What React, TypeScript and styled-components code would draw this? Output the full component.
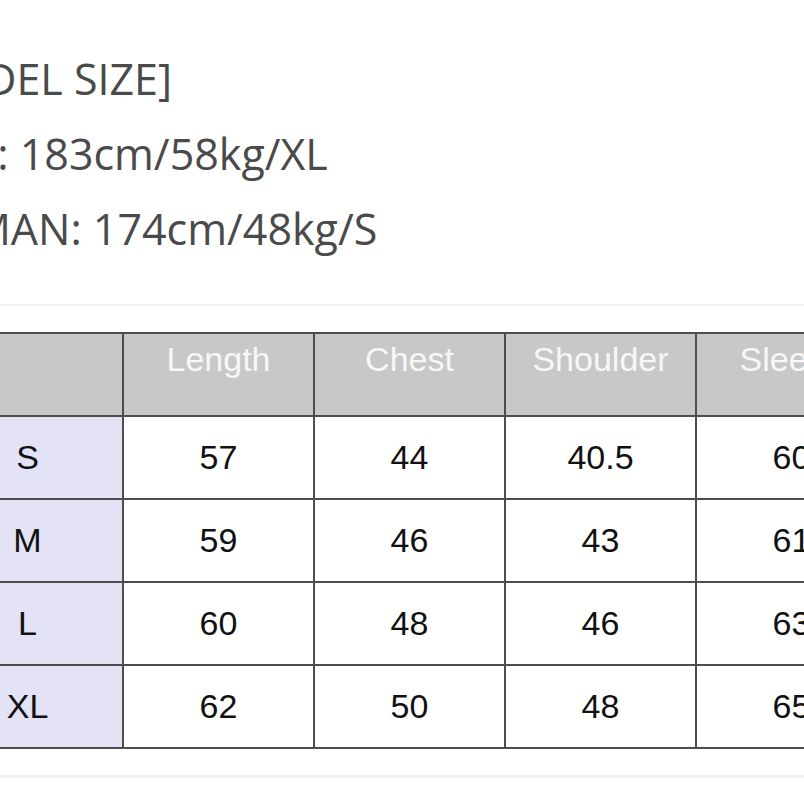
import styled, { createGlobalStyle } from 'styled-components';

const GlobalStyle = createGlobalStyle`
  html, body {
    margin: 0;
    padding: 0;
    background: #ffffff;
  }
  body {
    overflow: hidden;
  }
`;

const Page = styled.div`
  width: 804px;
  height: 804px;
  overflow: hidden;
  background: #ffffff;
`;

const ModelInfo = styled.div`
  margin-left: -101px;
  padding-top: 41px;
  font-family: "Open Sans", "Noto Sans", sans-serif;
  font-size: 43px;
  line-height: 75px;
  color: #4a4a4a;
  white-space: nowrap;
`;

const InfoLine = styled.div``;

const Divider = styled.div<{ $top: number; $bottom: number; $thick: number }>`
  height: ${p => p.$thick}px;
  background: #f1f1f1;
  margin-top: ${p => p.$top}px;
  margin-bottom: ${p => p.$bottom}px;
`;

const SizeTable = styled.table`
  margin-left: -69px;
  border-collapse: collapse;
  table-layout: fixed;
  width: ${191 * 5}px;
  font-family: "Liberation Sans", Arial, sans-serif;
  font-size: 34px;
`;

const HeadCell = styled.th`
  width: 191px;
  height: 83px;
  box-sizing: border-box;
  padding: 6px 0 0;
  vertical-align: top;
  background: #c8c8c8;
  color: #f7f7f7;
  font-weight: normal;
  line-height: 1.15;
  border: 2px solid #4d4d4d;
  white-space: nowrap;
`;

const Cell = styled.td<{ $size?: boolean }>`
  height: 83px;
  box-sizing: border-box;
  padding: 0;
  text-align: center;
  vertical-align: middle;
  color: #111111;
  background: ${p => (p.$size ? '#e3e3f5' : '#ffffff')};
  border: 2px solid #4d4d4d;
  white-space: nowrap;
`;

const headers = ['', 'Length', 'Chest', 'Shoulder', 'Sleeve'];

const rows = [
  ['S', '57', '44', '40.5', '60'],
  ['M', '59', '46', '43', '61'],
  ['L', '60', '48', '46', '63'],
  ['XL', '62', '50', '48', '65'],
];

export default function App() {
  return (
    <Page>
      <GlobalStyle />
      <ModelInfo>
        <InfoLine>[MODEL SIZE]</InfoLine>
        <InfoLine>MAN: 183cm/58kg/XL</InfoLine>
        <InfoLine>WOMAN: 174cm/48kg/S</InfoLine>
      </ModelInfo>

      <Divider $top={38} $bottom={26} $thick={2} />

      <SizeTable>
        <thead>
          <tr>
            {headers.map((h, i) => (
              <HeadCell key={i}>{h}</HeadCell>
            ))}
          </tr>
        </thead>
        <tbody>
          {rows.map(row => (
            <tr key={row[0]}>
              {row.map((v, i) => (
                <Cell key={i} $size={i === 0}>
                  {v}
                </Cell>
              ))}
            </tr>
          ))}
        </tbody>
      </SizeTable>

      <Divider $top={26} $bottom={0} $thick={3} />
    </Page>
  );
}
